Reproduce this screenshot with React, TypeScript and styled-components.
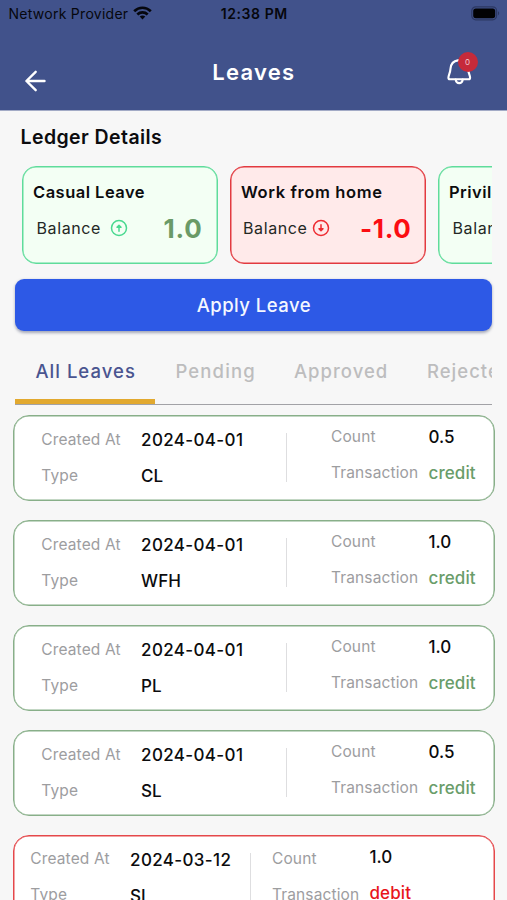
import React from 'react';
import styled, { createGlobalStyle } from 'styled-components';

const Global = createGlobalStyle`
  * { box-sizing: border-box; }
  body { margin: 0; background: #f7f7f7; font-family: Inter, sans-serif; color: #0c0c0e; }
`;

const Screen = styled.div`
  width: 507px;
  height: 900px;
  overflow: hidden;
  background: #f7f7f7;
  white-space: nowrap;
`;

const Header = styled.header`
  height: 111px;
  background: #41528b;
  border-bottom: 1px solid #a3abc6;
`;

const StatusBar = styled.div`
  display: grid;
  grid-template-columns: 1fr auto 1fr;
  align-items: center;
  height: 26px;
  padding: 0 7px 0 8.5px;
  font-size: 14px;
  color: #06070d;
`;

const Carrier = styled.div`
  display: flex;
  align-items: center;
  gap: 5px;
  letter-spacing: 0.27px;
`;

const Clock = styled.div`
  font-weight: 600;
  letter-spacing: 0.6px;
`;

const Battery = styled.svg`
  justify-self: end;
`;

const TitleBar = styled.div`
  display: grid;
  grid-template-columns: 1fr auto 1fr;
  align-items: center;
  height: 82px;
  margin-top: 2px;
  padding: 0 29.5px 0 24px;
`;

const BackButton = styled.button`
  width: 24px;
  height: 24px;
  margin-top: 24px;
  padding: 0;
  border: 0;
  background: none;
`;

const Title = styled.h1`
  margin: 6px 0 0 6px;
  font-size: 22px;
  line-height: 28px;
  font-weight: 600;
  letter-spacing: 1.25px;
  color: #fff;
`;

const BellButton = styled.div`
  position: relative;
  justify-self: end;
  width: 32px;
  height: 34px;
  margin-top: 2px;
`;

const Badge = styled.span`
  position: absolute;
  top: -1px;
  right: 0;
  width: 20px;
  height: 20px;
  border-radius: 50%;
  background: #c62a3a;
  color: #f0c8cf;
  font-size: 8px;
  line-height: 21px;
  text-align: center;
`;

const SectionTitle = styled.h2`
  margin: 13px 0 0 20.5px;
  font-size: 19.5px;
  line-height: 26px;
  font-weight: 600;
  letter-spacing: 0.42px;
`;

const Balances = styled.div`
  display: flex;
  gap: 12px;
  margin: 16px 15px 0 21.5px;
  overflow: hidden;
`;

type Tone = { $negative?: boolean };

const BalanceCard = styled.section<Tone>`
  flex: none;
  width: 196px;
  height: 98px;
  padding: 14px 14px 0 10.5px;
  border: 1px solid ${p => (p.$negative ? '#e23a40' : '#5fdc9b')};
  box-shadow: inset 0 0 0 0.5px ${p => (p.$negative ? '#e23a40' : '#5fdc9b')};
  border-radius: 14px;
  background: ${p => (p.$negative ? '#ffeaea' : '#f3fff4')};
`;

const BalanceName = styled.h3<{ $spacing: number }>`
  margin: 0;
  font-size: 16.5px;
  line-height: 22px;
  font-weight: 600;
  letter-spacing: ${p => p.$spacing}px;
`;

const BalanceRow = styled.div<Tone>`
  display: flex;
  align-items: center;
  height: 32px;
  margin-top: 9px;
  padding-left: ${p => (p.$negative ? 2 : 3.5)}px;
`;

const BalanceLabel = styled.span<Tone>`
  width: ${p => (p.$negative ? 69 : 73)}px;
  font-size: 16px;
  letter-spacing: 0.6px;
  color: #242825;
`;

const BalanceValue = styled.span<Tone>`
  margin-left: auto;
  margin-right: ${p => (p.$negative ? -0.8 : 0)}px;
  padding-top: 1.5px;
  font-size: 26px;
  line-height: 32px;
  font-weight: 700;
  letter-spacing: ${p => (p.$negative ? 0.6 : 0.8)}px;
  color: ${p => (p.$negative ? '#fb0d12' : '#6a9a67')};
`;

const ApplyButton = styled.button`
  display: block;
  width: 477px;
  height: 52px;
  margin: 15px 0 0 15.4px;
  padding: 0;
  border: 0;
  border-radius: 9px;
  background: #2d59e6;
  box-shadow: 0 1.5px 3px rgba(40, 50, 90, 0.4);
  color: #f4f7ff;
  font: 500 18.5px/52px Inter, sans-serif;
  letter-spacing: 0.46px;
`;

const Tabs = styled.nav`
  display: flex;
  height: 57px;
  margin: 17px 15px 0 15.4px;
  border-bottom: 1px solid #a2a2a6;
  overflow: hidden;
`;

const Tab = styled.div<{ $active?: boolean; $width: number; $spacing: number }>`
  flex: none;
  width: ${p => p.$width}px;
  height: 56px;
  padding: 9px 0 0 20px;
  border-bottom: ${p => (p.$active ? '5px solid #e2a92f' : '0')};
  font-size: 18.5px;
  line-height: 28px;
  font-weight: 500;
  letter-spacing: ${p => p.$spacing}px;
  color: ${p => (p.$active ? '#4a5590' : '#bdbdbe')};
`;

const List = styled.main`
  display: flex;
  flex-direction: column;
  gap: 19px;
  margin: 10px 12px 0 13px;
`;

const LeaveCard = styled.article<{ $debit: boolean }>`
  display: flex;
  flex: none;
  height: 86px;
  padding-left: ${p => (p.$debit ? 16.3 : 27.3)}px;
  border: 1px solid ${p => (p.$debit ? '#e5484b' : '#88af89')};
  box-shadow: inset 0 0 0 0.5px ${p => (p.$debit ? '#e5484b' : '#88af89')};
  border-radius: 16px;
  background: #fff;
`;

const Labels = styled.div<{ $width: number; $top: number }>`
  display: flex;
  flex: none;
  flex-direction: column;
  gap: 15.6px;
  width: ${p => p.$width}px;
  padding-top: ${p => p.$top}px;
  font-size: 15.5px;
  line-height: 20px;
  letter-spacing: 0.13px;
  color: #9d9d9f;
`;

const Values = styled.div<{ $width: number; $top: number }>`
  display: flex;
  flex: none;
  flex-direction: column;
  gap: 16px;
  width: ${p => p.$width}px;
  padding-top: ${p => p.$top}px;
  font-size: 17px;
  line-height: 20px;
  font-weight: 500;
`;

const CreatedDate = styled.span`
  letter-spacing: 0.35px;
`;

const Transaction = styled.span<{ $debit: boolean }>`
  letter-spacing: 0.1px;
  color: ${p => (p.$debit ? '#e8151b' : '#6a9d6a')};
`;

const Divider = styled.i<{ $gap: number }>`
  flex: none;
  width: 1px;
  height: 49px;
  margin: 17px ${p => p.$gap}px 0 0;
  background: #dedee0;
`;

const balances = [
  { name: 'Casual Leave', value: '1.0', spacing: 0.48 },
  { name: 'Work from home', value: '-1.0', spacing: 0.62, negative: true },
  { name: 'Privilege Leave', value: '1.0', spacing: 0.48 },
];

const leaves = [
  { date: '2024-04-01', type: 'CL', count: '0.5', kind: 'credit' },
  { date: '2024-04-01', type: 'WFH', count: '1.0', kind: 'credit' },
  { date: '2024-04-01', type: 'PL', count: '1.0', kind: 'credit' },
  { date: '2024-04-01', type: 'SL', count: '0.5', kind: 'credit' },
  { date: '2024-03-12', type: 'SL', count: '1.0', kind: 'debit' },
];

const WifiIcon = () => (
  <svg width="19" height="14" viewBox="0 0 19 14" fill="none" stroke="#06070d" strokeWidth="2.7">
    <path d="M1.2 5.2C5.9.6 13.1.6 17.8 5.2" />
    <path d="M4.3 8.5c3-2.8 7.4-2.8 10.4 0" />
    <path d="M6.700 10.500c1.700-1.400 3.900-1.400 5.600 0L9.500 13.600z" fill="#06070d" stroke="none" />
  </svg>
);

const BatteryIcon = () => (
  <Battery width="29" height="15" viewBox="0 0 29 15">
    <rect x=".8" y=".8" width="24.8" height="13" rx="4" fill="none" stroke="#2c3863" strokeWidth="1.2" />
    <rect x="2.2" y="2.4" width="22" height="9.8" rx="2.6" fill="#020204" />
    <path d="M27 5.2c1.600.7 1.600 3.400 0 4.100z" fill="#2c3863" />
  </Battery>
);

const BackIcon = () => (
  <svg width="24" height="24" viewBox="0 0 24 24" fill="none" stroke="#fff" strokeWidth="2.4" strokeLinecap="round" strokeLinejoin="round">
    <path d="M20.5 12H2.5M11.7 2.8 2.4 12l9.3 9.2" />
  </svg>
);

const BellIcon = () => (
  <svg width="32" height="34" viewBox="2.100 0 32 34" fill="none" stroke="#fff" strokeWidth="2.100" strokeLinecap="round" strokeLinejoin="round">
    <path d="M14 7.400c-4.600.7-7 3.700-7.400 8.200-.3 4.600-2.100 6.600-2.100 9.100 0 1 .5 1.500 1.500 1.500h18.700c1 0 1.500-.5 1.500-1.500 0-2.500-1.800-4.500-2.100-9.100-.3-4.500-2.800-7.500-7.400-8.200z" />
    <path d="M11.800 26.600c.3 2.300 1.600 3.500 3.500 3.500s3.200-1.200 3.500-3.500" />
  </svg>
);

const ArrowBadge = ({ down }: { down?: boolean }) => (
  <svg width="18" height="18" viewBox="0 0 18 18" fill="none" stroke={down ? '#ee2b31' : '#48d98f'} strokeWidth="1.5" strokeLinecap="round" strokeLinejoin="round">
    <circle cx="9" cy="9" r="7.5" />
    <path d={down ? 'M9 5.8v5.800M7 9.800l2 2 2-2z' : 'M9 12.200V6.400M7 8.200l2-2 2 2z'} />
  </svg>
);

export default function App() {
  return (
    <Screen>
      <Global />
      <Header>
        <StatusBar>
          <Carrier>Network Provider <WifiIcon /></Carrier>
          <Clock>12:38 PM</Clock>
          <BatteryIcon />
        </StatusBar>
        <TitleBar>
          <BackButton aria-label="Back"><BackIcon /></BackButton>
          <Title>Leaves</Title>
          <BellButton>
            <BellIcon />
            <Badge>0</Badge>
          </BellButton>
        </TitleBar>
      </Header>

      <SectionTitle>Ledger Details</SectionTitle>
      <Balances>
        {balances.map(b => (
          <BalanceCard key={b.name} $negative={b.negative}>
            <BalanceName $spacing={b.spacing}>{b.name}</BalanceName>
            <BalanceRow $negative={b.negative}>
              <BalanceLabel $negative={b.negative}>Balance</BalanceLabel>
              <ArrowBadge down={b.negative} />
              <BalanceValue $negative={b.negative}>{b.value}</BalanceValue>
            </BalanceRow>
          </BalanceCard>
        ))}
      </Balances>

      <ApplyButton>Apply Leave</ApplyButton>

      <Tabs>
        <Tab $active $width={140} $spacing={1.03}>All Leaves</Tab>
        <Tab $width={118.5} $spacing={1.15}>Pending</Tab>
        <Tab $width={133} $spacing={1.03}>Approved</Tab>
        <Tab $width={120} $spacing={1.03}>Rejected</Tab>
      </Tabs>

      <List>
        {leaves.map((l, i) => {
          const debit = l.kind === 'debit';
          return (
            <LeaveCard key={i} $debit={debit}>
              <Labels $width={99.8} $top={debit ? 13 : 14}>
                <span>Created At</span>
                <span>Type</span>
              </Labels>
              <Values $width={debit ? 119.9 : 144.9} $top={14}>
                <CreatedDate>{l.date}</CreatedDate>
                <span>{l.type}</span>
              </Values>
              <Divider $gap={debit ? 21 : 44} />
              <Labels $width={97.5} $top={debit ? 13 : 11.2}>
                <span>Count</span>
                <span>Transaction</span>
              </Labels>
              <Values $width={60} $top={debit ? 11 : 10.5}>
                <span>{l.count}</span>
                <Transaction $debit={debit}>{l.kind}</Transaction>
              </Values>
            </LeaveCard>
          );
        })}
      </List>
    </Screen>
  );
}
